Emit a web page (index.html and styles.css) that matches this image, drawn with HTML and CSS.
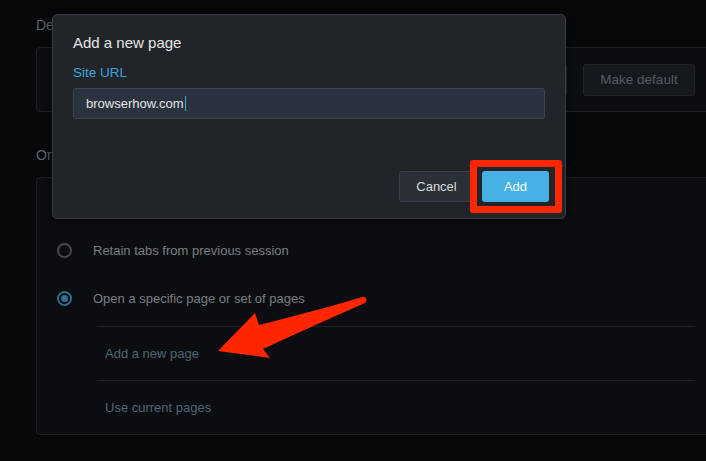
FILE: index.html
```html
<!DOCTYPE html>
<html lang="en">
<head>
<meta charset="utf-8">
<title>Add a new page</title>
<link rel="stylesheet" href="styles.css">
</head>
<body>
<div class="page">
  <h2 class="section-title first">Default browser</h2>
  <div class="card card-default">
    <div class="select-box"></div>
    <button class="btn-muted">Make default</button>
  </div>

  <h2 class="section-title second">On startup</h2>
  <div class="card card-startup">
    <div class="radio-row">
      <span class="radio"></span>
      <span class="radio-label">Open the start page</span>
    </div>
    <div class="radio-row">
      <span class="radio"></span>
      <span class="radio-label">Retain tabs from previous session</span>
    </div>
    <div class="radio-row">
      <span class="radio checked"></span>
      <span class="radio-label">Open a specific page or set of pages</span>
    </div>
    <div class="sub-list">
      <div class="sub-row">Add a new page</div>
      <div class="sub-row">Use current pages</div>
    </div>
  </div>
</div>

<div class="dialog">
  <h1 class="dialog-title">Add a new page</h1>
  <label class="field-label">Site URL</label>
  <div class="text-input">browserhow.com<span class="caret"></span></div>
  <div class="dialog-footer">
    <button class="btn btn-cancel">Cancel</button>
    <button class="btn btn-add">Add</button>
  </div>
</div>

<div class="highlight-box"></div>
<svg class="arrow" width="706" height="461" viewBox="0 0 706 461">
  <path d="M218 351 L255 313 L259 325 C290 317 330 307 362 297 C366 296 368 300 365 303 C330 318 296 334 263 349 L270 358 Z" fill="#ff2600"/>
</svg>
</body>
</html>
```

FILE: styles.css
```css
* { box-sizing: border-box; }

html, body {
  margin: 0;
  padding: 0;
}

body {
  position: relative;
  width: 706px;
  height: 461px;
  overflow: hidden;
  background: #07080a;
  font-family: "Liberation Sans", Arial, sans-serif;
}

.page {
  padding-left: 36px;
}

.section-title {
  margin: 0;
  font-size: 14px;
  line-height: 16px;
  font-weight: normal;
  color: #5e6268;
}

.section-title.first { padding-top: 17px; }
.section-title.second { margin-top: 35px; }

.card {
  width: 680px;
  margin-top: 14px;
  background: #0c0d10;
  border: 1px solid #1d2024;
  border-radius: 4px;
}

.card-default {
  height: 65px;
  display: flex;
  align-items: center;
  justify-content: flex-end;
  gap: 16px;
  padding-right: 20px;
}

.select-box {
  width: 220px;
  height: 32px;
  background: #111316;
  border: 1px solid #2a2e33;
  border-radius: 3px;
}

.btn-muted {
  width: 112px;
  height: 32px;
  background: #15181c;
  border: 1px solid #1f2327;
  border-radius: 3px;
  color: #575c62;
  font-family: inherit;
  font-size: 13.5px;
  padding: 0;
}

.radio-row {
  height: 48px;
  display: flex;
  align-items: center;
  gap: 21px;
  padding-left: 20px;
}

.radio {
  width: 15px;
  height: 15px;
  border: 2px solid #45484d;
  border-radius: 50%;
  display: flex;
  align-items: center;
  justify-content: center;
  flex: none;
}

.radio.checked {
  border-color: #2b6e8e;
}

.radio.checked::after {
  content: "";
  width: 7px;
  height: 7px;
  border-radius: 50%;
  background: #2c7196;
}

.radio-label {
  font-size: 13px;
  color: #7a7e83;
}

.sub-list {
  margin: 4px 20px 0 60px;
}

.sub-row {
  height: 54px;
  border-top: 1px solid #1c1f23;
  display: flex;
  align-items: center;
  padding-left: 8px;
  font-size: 13px;
  color: #4b6777;
}

/* Modal dialog overlay */
.dialog {
  position: absolute;
  left: 52px;
  top: 14px;
  width: 514px;
  height: 205px;
  background: #212428;
  border: 1px solid #383d44;
  border-radius: 5px;
  padding: 19px 20px 16px 20px;
  display: flex;
  flex-direction: column;
  box-shadow: 0 2px 10px rgba(0, 0, 0, 0.5);
}

.dialog-title {
  margin: 0;
  font-size: 15px;
  line-height: 18px;
  font-weight: normal;
  color: #e6e7e8;
}

.field-label {
  display: block;
  margin-top: 13px;
  font-size: 13.5px;
  line-height: 16px;
  color: #3aa6de;
}

.text-input {
  margin-top: 7px;
  height: 31px;
  background: #2a333d;
  border: 1px solid #3a434e;
  border-radius: 3px;
  padding-left: 12px;
  display: flex;
  align-items: center;
  font-size: 13px;
  color: #e3e5e7;
}

.caret {
  display: inline-block;
  width: 1px;
  height: 15px;
  margin-left: 1px;
  background: #3aa6de;
}

.dialog-footer {
  margin-top: auto;
  margin-right: -4px;
  display: flex;
  justify-content: flex-end;
  gap: 8px;
}

.btn {
  height: 31px;
  border-radius: 3px;
  font-family: inherit;
  font-size: 13px;
  padding: 0;
}

.btn-cancel {
  width: 75px;
  background: #2b3038;
  border: 1px solid #3b4048;
  color: #d9dbdd;
}

.btn-add {
  width: 67px;
  background: #47b1e5;
  border: none;
  color: #f4faff;
}

/* Annotation overlays */
.highlight-box {
  position: absolute;
  left: 470px;
  top: 160px;
  width: 92px;
  height: 53px;
  border: 7px solid #ff2600;
  border-radius: 3px;
}

.arrow {
  position: absolute;
  left: 0;
  top: 0;
  pointer-events: none;
}
```
